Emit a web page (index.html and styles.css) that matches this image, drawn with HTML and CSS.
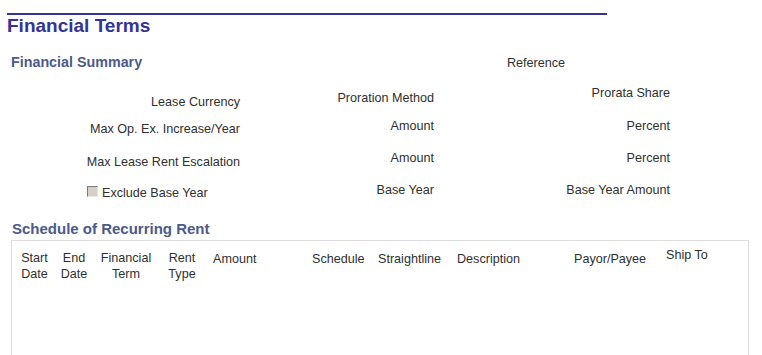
FILE: index.html
```html
<!DOCTYPE html>
<html lang="en">
<head>
    <meta charset="UTF-8">
    <title>Financial Terms</title>
    <link rel="stylesheet" href="styles.css">
</head>
<body>
    <div class="page">
        <div class="title-rule"></div>
        <h1 class="page-title">Financial Terms</h1>

        <div class="summary-head">
            <h2 class="group-label">Financial Summary</h2>
            <span class="ref-label">Reference</span>
        </div>

        <div class="fields">
            <div class="field-col col-one">
                <div class="field-label r1">Lease Currency</div>
                <div class="field-label r2">Max Op. Ex. Increase/Year</div>
                <div class="field-label r3">Max Lease Rent Escalation</div>
                <div class="field-label r4 check-row">
                    <span class="checkbox"></span>
                    <span>Exclude Base Year</span>
                </div>
            </div>
            <div class="field-col col-two">
                <div class="field-label r1">Proration Method</div>
                <div class="field-label r2">Amount</div>
                <div class="field-label r3">Amount</div>
                <div class="field-label r4">Base Year</div>
            </div>
            <div class="field-col col-three">
                <div class="field-label r1">Prorata Share</div>
                <div class="field-label r2">Percent</div>
                <div class="field-label r3">Percent</div>
                <div class="field-label r4">Base Year Amount</div>
            </div>
        </div>

        <h2 class="group-label schedule-label">Schedule of Recurring Rent</h2>

        <div class="grid-box">
            <div class="grid-head">
                <div class="th center">Start<br>Date</div>
                <div class="th center">End<br>Date</div>
                <div class="th center">Financial<br>Term</div>
                <div class="th center">Rent<br>Type</div>
                <div class="th single amount">Amount</div>
                <div class="th single">Schedule</div>
                <div class="th single">Straightline</div>
                <div class="th single">Description</div>
                <div class="th single">Payor/Payee</div>
                <div class="th ship">Ship To</div>
            </div>
        </div>
    </div>
</body>
</html>
```

FILE: styles.css
```css
body {
    margin: 0;
    font-family: "Liberation Sans", Arial, sans-serif;
    background-color: #fff;
    color: #2f2f2f;
}

.page {
    padding-left: 7px;
    padding-top: 13px;
}

.title-rule {
    width: 600px;
    border-top: 2px solid #333399;
}

.page-title {
    margin: 0;
    font-size: 19px;
    line-height: 22px;
    font-weight: bold;
    color: #333399;
}

.summary-head {
    display: flex;
    align-items: baseline;
    margin-top: 17px;
}

.group-label {
    margin: 0;
    font-size: 14.3px;
    line-height: 16px;
    font-weight: bold;
    color: #4b5a8c;
}

.summary-head .group-label {
    padding-left: 4px;
    width: 496px;
}

.ref-label {
    font-size: 12.6px;
    line-height: 16px;
}

.fields {
    display: flex;
}

.field-col {
    display: flex;
    flex-direction: column;
    text-align: right;
}

.col-one { width: 233px; }
.col-two { width: 194px; }
.col-three { width: 236px; }

.field-label {
    font-size: 12.6px;
    line-height: 14px;
    white-space: nowrap;
}

.col-one .r1 { margin-top: 24px; }
.col-one .r2 { margin-top: 13px; }
.col-one .r3 { margin-top: 19px; }
.col-one .r4 { margin-top: 17px; }

.col-two .r1 { margin-top: 20px; }
.col-two .r2 { margin-top: 14px; }
.col-two .r3 { margin-top: 18px; }
.col-two .r4 { margin-top: 18px; }

.col-three .r1 { margin-top: 15px; }
.col-three .r2 { margin-top: 19px; }
.col-three .r3 { margin-top: 18px; }
.col-three .r4 { margin-top: 18px; }

.check-row {
    display: flex;
    align-items: baseline;
    gap: 4px;
    text-align: left;
    padding-left: 80px;
}

.checkbox {
    width: 9px;
    height: 9px;
    background-color: #d4d0c8;
    border: 1px solid;
    border-color: #7a7a7a #e8e6e2 #e8e6e2 #7a7a7a;
}

.schedule-label {
    font-size: 15px;
    line-height: 18px;
    margin-top: 20px;
    padding-left: 5px;
}

.grid-box {
    margin-top: 2px;
    margin-left: 4px;
    width: 736px;
    height: 110px;
    border: 1px solid #dddddd;
    padding-top: 9px;
}

.grid-head {
    display: grid;
    grid-template-columns: 45px 34px 70px 42px 109px 66px 79px 117px 92px 1fr;
}

.th {
    font-size: 12.6px;
    line-height: 16px;
    white-space: nowrap;
}

.th.center {
    text-align: center;
}

.th.single {
    margin-top: 1px;
}

.th.amount {
    padding-left: 10px;
}

.th.ship {
    margin-top: -3px;
}
```
